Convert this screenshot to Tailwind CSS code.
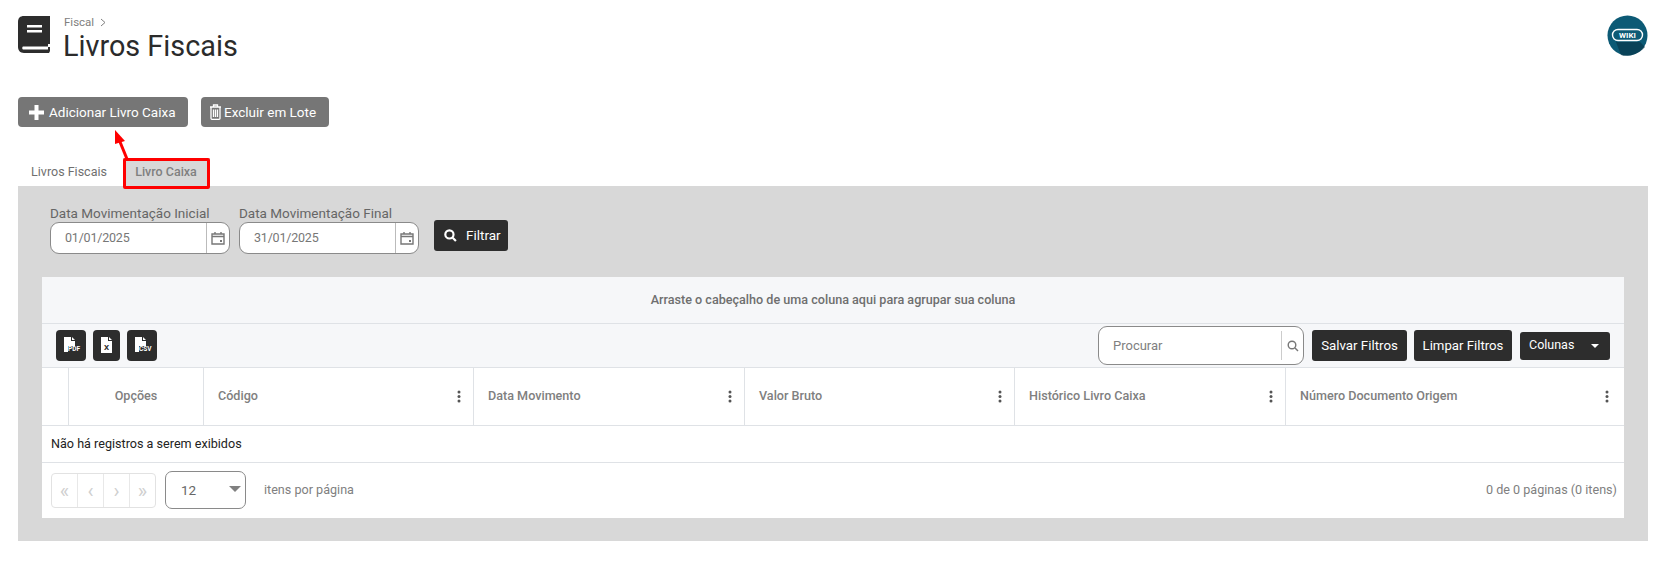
<!DOCTYPE html>
<html lang="pt-BR">
<head>
  <meta charset="UTF-8">
  <title>Livros Fiscais</title>
  <script src="https://cdn.jsdelivr.net/npm/@tailwindcss/browser@4"></script>
</head>
<body class="bg-white font-['Roboto',sans-serif] overflow-hidden">
  <div class="relative w-[1662px] h-[568px] px-[18px]">

    <!-- cabecalho -->
    <div class="flex justify-between h-[97px] pt-[16px]">
      <div class="flex gap-[14px]">
        <svg class="w-[32px] h-[37px]" viewBox="0 0 32 37">
          <path d="M6 0H32V28H30V31H32V35L31 37H6C2 37 0 34 0 31V6C0 2 2 0 6 0Z" fill="#2d2d2d"/>
          <path d="M5 30.5H30V33.5H5C4 33.5 4 30.5 5 30.5Z" fill="#fff"/>
          <rect x="9" y="9" width="15" height="2.5" fill="#fff"/>
          <rect x="9" y="14" width="15" height="2.5" fill="#fff"/>
        </svg>
        <div class="-mt-[1px]">
          <div class="flex items-center gap-[6px] text-[11.5px] leading-[14px] text-[#808080] h-[14px]">
            <span>Fiscal</span>
            <svg class="w-[6px] h-[9px]" viewBox="0 0 6 9" fill="none" stroke="#808080"><path d="M1 1L5 4.5L1 8"/></svg>
          </div>
          <h1 class="text-[28.8px] leading-[30px] text-[#2b2b2b] mt-[2px] -ml-[1px]">Livros Fiscais</h1>
        </div>
      </div>
      <svg class="w-[41px] h-[41px] mr-[-4px] -mt-[1px]" viewBox="0 0 41 41">
        <circle cx="20.5" cy="20.5" r="20" fill="#0c5a75"/>
        <path d="M9 27L33 27L38 32C30 41 18 42 14 40Z" fill="#09384b" opacity="0.7"/>
        <rect x="5.5" y="14.5" width="30" height="11" rx="5.5" fill="none" stroke="#fff" stroke-width="1.4"/>
        <text x="20.5" y="23" text-anchor="middle" font-size="8" font-weight="700" fill="#fff" font-family="Roboto">WIKI</text>
      </svg>
    </div>

    <!-- acoes -->
    <div class="flex gap-[14px] h-[30px]">
      <button class="flex items-center w-[170px] pl-[11px] gap-[5px] bg-[#767676] rounded-[4px] text-white text-[13.5px]">
        <svg class="w-[15px] h-[15px]" viewBox="0 0 15 15"><path d="M5.5 0H9.500V5.500H15V9.500H9.500V15H5.500V9.500H0V5.500H5.500Z" fill="#fff"/></svg>
        <span>Adicionar Livro Caixa</span>
      </button>
      <button class="flex items-center w-[128px] pl-[8px] gap-[2px] bg-[#767676] rounded-[4px] text-white text-[13.5px] -ml-[1px]">
        <svg class="w-[13px] h-[16px]" viewBox="0 0 13 16" fill="none" stroke="#fff" stroke-width="1.3">
          <path d="M1 3H12M4.500 3V1H8.500V3M2 3V14.500C2 15 2.500 15.300 3 15.300H10C10.500 15.300 11 15 11 14.500V3"/>
          <path d="M4.500 5.500V13M6.500 5.500V13M8.500 5.500V13"/>
        </svg>
        <span>Excluir em Lote</span>
      </button>
    </div>

    <!-- abas -->
    <div class="flex h-[59px] items-end text-[12.5px]">
      <div class="w-[105px] h-[28px] flex items-center justify-center pr-[3px] text-[#6f6f6f]">Livros Fiscais</div>
      <div class="w-[87px] h-[28px] flex items-center justify-center pr-[1px] bg-[#d8d8d8] text-[#808080] font-medium">Livro Caixa</div>
    </div>

    <!-- painel -->
    <div class="bg-[#d8d8d8] h-[355px] w-[1630px] pt-[18px] px-[24px]">
      <div class="flex items-start pl-[8px] gap-[9px]">
        <div class="w-[180px]">
          <div class="text-[13.5px] leading-[18px] text-[#666]">Data Movimentação Inicial</div>
          <div class="flex h-[32px] bg-white border border-[#8a8a8a] rounded-[9px] text-[12.5px] tracking-[-0.2px] text-[#777]">
            <div class="flex-1 pl-[14px] leading-[30px]">01/01/2025</div>
            <div class="w-[23px] border-l border-[#bbb] flex items-center justify-center">
              <svg class="w-[14px] h-[14px]" viewBox="0 0 14 14" fill="none" stroke="#777" stroke-width="1.4"><path d="M1 3H13V13H1ZM1 5.500H13M4 1V3M10 1V3"/><rect x="9" y="9" width="2" height="2" fill="#777" stroke="none"/></svg>
            </div>
          </div>
        </div>
        <div class="w-[180px]">
          <div class="text-[13.5px] leading-[18px] text-[#666]">Data Movimentação Final</div>
          <div class="flex h-[32px] bg-white border border-[#8a8a8a] rounded-[9px] text-[12.5px] tracking-[-0.2px] text-[#777]">
            <div class="flex-1 pl-[14px] leading-[30px]">31/01/2025</div>
            <div class="w-[23px] border-l border-[#bbb] flex items-center justify-center">
              <svg class="w-[14px] h-[14px]" viewBox="0 0 14 14" fill="none" stroke="#777" stroke-width="1.4"><path d="M1 3H13V13H1ZM1 5.500H13M4 1V3M10 1V3"/><rect x="9" y="9" width="2" height="2" fill="#777" stroke="none"/></svg>
            </div>
          </div>
        </div>
        <button class="flex items-center gap-[9px] w-[74px] h-[31px] mt-[16px] ml-[6px] pl-[10px] bg-[#2d2d2d] rounded-[3px] text-white text-[13.5px]">
          <svg class="w-[13px] h-[13px]" viewBox="0 0 12 12" fill="none" stroke="#fff" stroke-width="2"><circle cx="5" cy="5" r="3.800"/><path d="M8 8L11 11"/></svg>
          <span>Filtrar</span>
        </button>
      </div>

      <!-- grade -->
      <div class="mt-[23px] w-[1582px] bg-white">
        <div class="h-[47px] bg-[#f6f7f9] border-b border-[#dfe2e6] flex items-center justify-center text-[12.6px] font-medium text-[#6f6f6f]">Arraste o cabeçalho de uma coluna aqui para agrupar sua coluna</div>

        <div class="h-[44px] bg-[#f6f7f9] border-b border-[#dfe2e6] flex items-center justify-between pl-[14px] pr-[14px]">
          <div class="flex gap-[7px] mt-[-1px]">
            <button class="relative w-[30px] h-[31px] bg-[#2d2d2d] rounded-[4px]">
              <svg class="absolute left-[8px] top-[7px] w-[15px] h-[16px]" viewBox="0 0 15 16"><path d="M0 0H7V4H11V9H0ZM8 0L11 3H8ZM0 9H4V15H0Z" fill="#fff"/></svg>
              <span class="absolute left-[12px] top-[15px] text-[6.5px] leading-[8px] font-bold text-white">PDF</span>
            </button>
            <button class="relative w-[27px] h-[31px] bg-[#2d2d2d] rounded-[4px]">
              <svg class="absolute left-[8px] top-[7px] w-[11px] h-[16px]" viewBox="0 0 11 16"><path d="M0 0H7V4H11V16H0ZM8 0L11 3H8Z" fill="#fff"/></svg>
              <span class="absolute left-[11px] top-[14px] text-[8px] leading-[8px] font-bold text-[#2d2d2d]">X</span>
            </button>
            <button class="relative w-[30px] h-[31px] bg-[#2d2d2d] rounded-[4px]">
              <svg class="absolute left-[8px] top-[7px] w-[15px] h-[16px]" viewBox="0 0 15 16"><path d="M0 0H7V4H11V9H0ZM8 0L11 3H8ZM0 9H4V15H0Z" fill="#fff"/></svg>
              <span class="absolute left-[12px] top-[15px] text-[6.5px] leading-[8px] font-bold text-white">CSV</span>
            </button>
          </div>
          <div class="flex items-center">
            <div class="flex items-center w-[206px] h-[39px] bg-white border border-[#8a8a8a] rounded-[9px] mr-[8px]">
              <div class="flex-1 pl-[14px] text-[13px] text-[#808080]">Procurar</div>
              <div class="w-[22px] h-[29px] border-l border-[#ccc] flex items-center justify-center">
                <svg class="w-[12px] h-[12px]" viewBox="0 0 12 12" fill="none" stroke="#777" stroke-width="1.400"><circle cx="5" cy="5" r="3.800"/><path d="M8 8L11 11"/></svg>
              </div>
            </div>
            <button class="w-[95px] h-[31px] bg-[#2d2d2d] rounded-[3px] text-white text-[13.3px] mr-[7px]">Salvar Filtros</button>
            <button class="w-[98px] h-[31px] bg-[#2d2d2d] rounded-[3px] text-white text-[13.2px] mr-[8px]">Limpar Filtros</button>
            <button class="flex items-center justify-between w-[90px] h-[28px] px-[9px] bg-[#2d2d2d] rounded-[3px] text-white text-[12.5px]">
              <span>Colunas</span>
              <span class="w-0 h-0 border-x-[4px] border-x-transparent border-t-[4px] border-t-white mr-[2px]"></span>
            </button>
          </div>
        </div>

        <div class="flex h-[58px] border-b border-[#dfe2e6] text-[12.6px] font-medium text-[#808080]">
          <div class="w-[27px] border-r border-[#dfe2e6]"></div>
          <div class="w-[135px] border-r border-[#dfe2e6] flex items-center justify-center">Opções</div>
          <div class="w-[270px] border-r border-[#dfe2e6] flex items-center justify-between pl-[14px] pr-[12px]"><span>Código</span><svg class="w-[4px] h-[13px]" viewBox="0 0 4 13" fill="#555"><circle cx="2" cy="2" r="1.500"/><circle cx="2" cy="6.500" r="1.500"/><circle cx="2" cy="11" r="1.500"/></svg></div>
          <div class="w-[271px] border-r border-[#dfe2e6] flex items-center justify-between pl-[14px] pr-[12px]"><span>Data Movimento</span><svg class="w-[4px] h-[13px]" viewBox="0 0 4 13" fill="#555"><circle cx="2" cy="2" r="1.500"/><circle cx="2" cy="6.500" r="1.500"/><circle cx="2" cy="11" r="1.500"/></svg></div>
          <div class="w-[270px] border-r border-[#dfe2e6] flex items-center justify-between pl-[14px] pr-[12px]"><span>Valor Bruto</span><svg class="w-[4px] h-[13px]" viewBox="0 0 4 13" fill="#555"><circle cx="2" cy="2" r="1.500"/><circle cx="2" cy="6.500" r="1.500"/><circle cx="2" cy="11" r="1.500"/></svg></div>
          <div class="w-[271px] border-r border-[#dfe2e6] flex items-center justify-between pl-[14px] pr-[12px]"><span>Histórico Livro Caixa</span><svg class="w-[4px] h-[13px]" viewBox="0 0 4 13" fill="#555"><circle cx="2" cy="2" r="1.500"/><circle cx="2" cy="6.500" r="1.500"/><circle cx="2" cy="11" r="1.500"/></svg></div>
          <div class="flex-1 flex items-center justify-between pl-[14px] pr-[15px]"><span>Número Documento Origem</span><svg class="w-[4px] h-[13px]" viewBox="0 0 4 13" fill="#555"><circle cx="2" cy="2" r="1.500"/><circle cx="2" cy="6.500" r="1.500"/><circle cx="2" cy="11" r="1.500"/></svg></div>
        </div>

        <div class="h-[37px] border-b border-[#dfe2e6] pl-[9px] flex items-center text-[12.6px] text-[#222]">Não há registros a serem exibidos</div>

        <div class="h-[55px] flex items-center pl-[9px] pr-[7px] text-[12.6px] text-[#808080]">
          <div class="flex w-[105px] h-[35px] border border-[#e2e2e2] rounded-[4px] text-[#cfcfcf] text-[20px] leading-none">
            <div class="flex-1 flex items-center justify-center border-r border-[#e8e8e8]">«</div>
            <div class="flex-1 flex items-center justify-center border-r border-[#e8e8e8]">‹</div>
            <div class="flex-1 flex items-center justify-center border-r border-[#e8e8e8]">›</div>
            <div class="flex-1 flex items-center justify-center">»</div>
          </div>
          <div class="flex items-center justify-between w-[81px] h-[38px] ml-[9px] -mt-[1px] pl-[15px] pr-[4px] border border-[#8a8a8a] rounded-[7px] text-[13.5px] text-[#666]">
            <span>12</span>
            <span class="w-0 h-0 border-x-[6px] border-x-transparent border-t-[6px] border-t-[#808080] -mt-[2px]"></span>
          </div>
          <span class="ml-[18px]">itens por página</span>
          <span class="ml-auto">0 de 0 páginas (0 itens)</span>
        </div>
      </div>
    </div>

    <!-- anotacao em vermelho -->
    <div class="absolute left-[123px] top-[158px] w-[87px] h-[31px] border-[3px] border-[#ff0000] rounded-[2px]"></div>
    <svg class="absolute left-[105px] top-[125px] w-[30px] h-[35px]" viewBox="0 0 30 35">
      <path d="M22 34L13 12" stroke="#f00" stroke-width="3" fill="none"/>
      <path d="M10 5L20 16L10 19Z" fill="#f00"/>
    </svg>
  </div>
</body>
</html>
